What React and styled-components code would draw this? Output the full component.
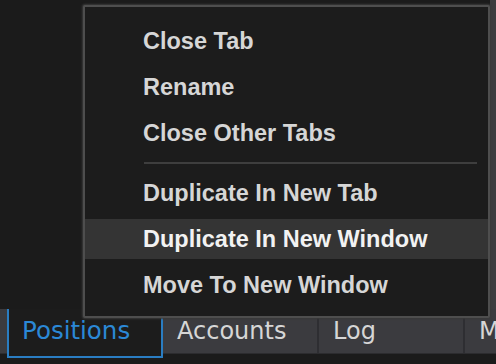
import React from "react"
import styled, { createGlobalStyle } from "styled-components"

const GlobalStyle = createGlobalStyle`
  html, body {
    margin: 0;
    padding: 0;
    background: #1b1b1b;
    overflow: hidden;
  }
  #root {
    width: 496px;
    height: 364px;
  }
`

const Page = styled.div`
  position: relative;
  width: 496px;
  height: 364px;
  display: flex;
  flex-direction: column;
  background: #1b1b1b;
`

const Workspace = styled.div`
  height: 309px;
  display: flex;
  justify-content: flex-end;
`

const EdgeStrip = styled.div`
  width: 6px;
  background: #3d3d3f;
`

const TabBar = styled.div`
  height: 44px;
  display: flex;
  align-items: flex-start;
  padding-left: 7px;
  background: #3b3b3f;
  border-bottom: 1px solid #2c2c2f;
`

const Tab = styled.div`
  box-sizing: border-box;
  width: ${p => p.$w}px;
  flex: none;
  height: ${p => (p.$active ? 49 : 44)}px;
  display: flex;
  align-items: center;
  padding-left: ${p => (p.$active ? 13 : 14)}px;
  padding-bottom: ${p => (p.$active ? 5 : 0)}px;
  font-family: "DejaVu Sans", Verdana, sans-serif;
  font-size: ${p => (p.$active ? 24.5 : 24)}px;
  color: ${p => (p.$active ? "#2b88d6" : "#d6d6d6")};
  background: ${p => (p.$active ? "#1c1c1c" : "transparent")};
  border: ${p => (p.$active ? "2px solid #2a7dc2" : "none")};
  border-top: none;
  border-right: ${p => (p.$active ? "2px solid #2a7dc2" : p.$last ? "none" : "2px solid #2e2e32")};
  position: relative;
  z-index: 1;
  white-space: nowrap;
  overflow: hidden;
`

const Menu = styled.div`
  position: absolute;
  left: 83px;
  top: 5px;
  width: 407px;
  height: 313px;
  box-sizing: border-box;
  display: flex;
  flex-direction: column;
  gap: 6px;
  background: #1c1c1c;
  border: 2px solid #4e4e4e;
  border-radius: 2px;
  box-shadow: 0 0 2px 1px #3a3a3a;
  padding: 14px 0 10px;
  z-index: 5;
  font-family: "Liberation Sans", Arial, sans-serif;
`

const Item = styled.div`
  height: 40px;
  flex: none;
  display: flex;
  align-items: center;
  padding-left: 58px;
  font-size: 23.5px;
  font-weight: bold;
  color: ${p => (p.$hover ? "#f2f2f2" : "#d6d6d6")};
  background: ${p => (p.$hover ? "#343434" : "transparent")};
  white-space: nowrap;
`

const Separator = styled.div`
  height: 2px;
  flex: none;
  margin: 3px 11px 3px 59px;
  background: #3e3e3e;
`

export default function App() {
  return (
    <Page>
      <GlobalStyle />
      <Workspace>
        <EdgeStrip />
      </Workspace>
      <TabBar>
        <Tab $active $w={156}>Positions</Tab>
        <Tab $w={156}>Accounts</Tab>
        <Tab $w={146}>Log</Tab>
        <Tab $w={40} $last>M</Tab>
      </TabBar>
      <Menu>
        <Item>Close Tab</Item>
        <Item>Rename</Item>
        <Item>Close Other Tabs</Item>
        <Separator />
        <Item>Duplicate In New Tab</Item>
        <Item $hover>Duplicate In New Window</Item>
        <Item>Move To New Window</Item>
      </Menu>
    </Page>
  )
}
